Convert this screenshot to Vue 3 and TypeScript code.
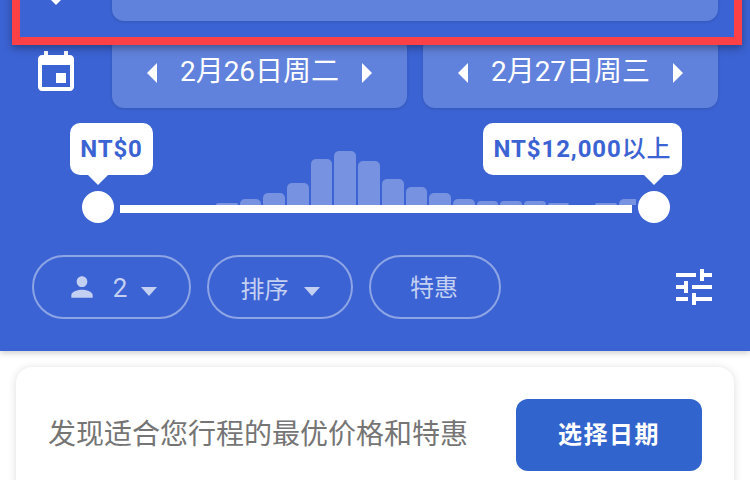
<script setup lang="ts">
const bars: { h: number }[] = [
  { h: 2 }, { h: 6 }, { h: 12 }, { h: 22 }, { h: 46 }, { h: 54 }, { h: 44 }, { h: 26 },
  { h: 18 }, { h: 12 }, { h: 6 }, { h: 4 }, { h: 4 }, { h: 4 }, { h: 2 }, { h: 0 }, { h: 2 }, { h: 6 },
];
</script>

<template>
  <div class="page">
    <header class="header">
      <div class="row date-row">
        <div class="icon-cell">
          <svg class="cal" width="48" height="48" viewBox="0 0 24 24" fill="#fff">
            <path d="M17 12h-5v5h5v-5zM16 1v2H8V1H6v2H5c-1.11 0-1.99.9-1.99 2L3 19c0 1.1.89 2 2 2h14c1.1 0 2-.9 2-2V5c0-1.1-.9-2-2-2h-1V1h-2zm3 18H5V8h14v11z" />
          </svg>
        </div>
        <div class="field date">
          <span class="tri left"></span>
          <span class="date-text">2月26日周二</span>
          <span class="tri right"></span>
        </div>
        <div class="field date">
          <span class="tri left"></span>
          <span class="date-text">2月27日周三</span>
          <span class="tri right"></span>
        </div>
      </div>

      <div class="slider">
        <div class="tip tip-left">NT$0</div>
        <div class="tip tip-right">NT$12,000<span class="tip-cjk">以上</span></div>
        <div class="hist">
          <span v-for="(b, i) in bars" :key="i" class="bar" :style="{ height: b.h + 'px' }"></span>
        </div>
        <div class="track-row">
          <span class="thumb"></span>
          <span class="track"></span>
          <span class="thumb"></span>
        </div>
      </div>

      <div class="filters">
        <button class="pill pill-pax">
          <svg class="person" width="32" height="32" viewBox="0 0 24 24" fill="#c4d0f2">
            <path d="M12 12c2.21 0 4-1.79 4-4s-1.79-4-4-4-4 1.79-4 4 1.79 4 4 4zm0 2c-2.67 0-8 1.34-8 4v2h16v-2c0-2.66-5.33-4-8-4z" />
          </svg>
          <span class="pill-num">2</span>
          <span class="caret"></span>
        </button>
        <button class="pill pill-sort"><span>排序</span><span class="caret"></span></button>
        <button class="pill pill-deal">特惠</button>
        <svg class="tune" width="48" height="48" viewBox="0 0 24 24" fill="#fff">
          <path d="M3 17v2h6v-2H3zM3 5v2h10V5H3zm10 16v-2h8v-2h-8v-2h-2v6h2zM7 9v2H3v2h4v2h2V9H7zm14 4v-2H11v2h10zm-6-4h2V7h4V5h-4V3h-2v6z" />
        </svg>
      </div>
    </header>

    <section class="card">
      <p class="card-text">发现适合您行程的最优价格和特惠</p>
      <button class="cta">选择日期</button>
    </section>

    <div class="highlight">
      <svg class="swap" width="10" height="5" viewBox="0 0 10 5"><path d="M0 0h10L5 5z" fill="#fff" /></svg>
      <div class="field wide"></div>
    </div>
  </div>
</template>

<style>
html, body { margin: 0; background: #fff; overflow: hidden; }
</style>

<style scoped>
.page {
  position: relative;
  width: 750px;
  height: 480px;
  overflow: hidden;
  background: #fff;
  font-family: Roboto, "Noto Sans CJK SC", sans-serif;
}
.header {
  box-sizing: border-box;
  height: 351px;
  background: #3b63d3;
  box-shadow: 0 2px 6px rgba(0, 0, 0, 0.2);
  display: flex;
  flex-direction: column;
  padding: 36px 32px 0;
}
.row { display: flex; gap: 16px; }
.date-row { height: 72px; }
.icon-cell {
  width: 64px;
  flex: none;
  display: flex;
  align-items: center;
  justify-content: flex-start;
}
.cal { margin-top: 2px; }
.field {
  background: #6182dc;
  border-radius: 12px;
  box-shadow: 0 1px 3px rgba(0, 0, 0, 0.14);
  display: flex;
  align-items: center;
  justify-content: center;
  color: #fff;
}
.wide { width: 606px; height: 70px; margin-left: 51px; flex: none; }
.date { width: 295px; box-sizing: border-box; }
.date-text { font-size: 28px; line-height: 40px; margin: 0 23px; white-space: nowrap; }
.tri { width: 0; height: 0; border-top: 10px solid transparent; border-bottom: 10px solid transparent; position: relative; top: 1px; }
.tri.left { border-right: 10px solid #fff; }
.tri.right { border-left: 10px solid #fff; }

.slider {
  position: relative;
  height: 103px;
  margin-top: 15px;
  margin-left: -32px;
  margin-right: -32px;
}
.tip {
  position: absolute;
  top: 0;
  height: 52px;
  box-sizing: border-box;
  background: #fff;
  border-radius: 10px;
  color: #3b63d3;
  font-size: 24px;
  font-weight: 700;
  letter-spacing: 0.9px;
  line-height: 52px;
  text-align: center;
  white-space: nowrap;
}
.tip-cjk { font-weight: 500; }
.tip::after {
  content: "";
  position: absolute;
  top: 52px;
  width: 0;
  height: 0;
  border-left: 10px solid transparent;
  border-right: 10px solid transparent;
  border-top: 10px solid #fff;
}
.tip-left { left: 70px; width: 83px; }
.tip-left::after { left: 18px; }
.tip-right { left: 483px; width: 199px; }
.tip-right::after { left: 161px; }
.hist {
  position: absolute;
  left: 216px;
  bottom: 21px;
  width: 420px;
  height: 56px;
  display: flex;
  align-items: flex-end;
  gap: 2px;
  overflow: hidden;
}
.bar {
  flex: none;
  width: 21.7px;
  background: rgba(255, 255, 255, 0.3);
  border-radius: 5px 5px 0 0;
}
.track-row {
  position: absolute;
  left: 82px;
  right: 80px;
  top: 68px;
  height: 32px;
  display: flex;
  align-items: center;
  gap: 6px;
}
.thumb { width: 32px; height: 32px; border-radius: 50%; background: #fff; flex: none; }
.track { flex: 1; height: 8px; background: #fff; margin-top: 4px; }

.filters {
  display: flex;
  align-items: center;
  gap: 16px;
  margin-top: 29px;
  position: relative;
}
.pill {
  box-sizing: border-box;
  height: 64px;
  border: 2px solid rgba(255, 255, 255, 0.42);
  border-radius: 32px;
  background: transparent;
  color: #c4d0f2;
  font: inherit;
  font-size: 24px;
  padding: 0;
  display: flex;
  align-items: center;
  justify-content: center;
}
.pill-pax { width: 159px; }
.pill-sort { width: 146px; gap: 15px; }
.pill-deal { width: 132px; padding: 0 2px 4px 0; }
.person { margin-right: 15px; margin-left: 0; }
.pill-num { font-size: 26px; margin-right: 14px; position: relative; top: 1px; }
.caret {
  width: 0;
  height: 0;
  border-left: 8px solid transparent;
  border-right: 8px solid transparent;
  border-top: 9px solid #c4d0f2;
  margin-top: 8px;
}
.tune { margin-left: auto; margin-right: 0; flex: none; }

.card {
  box-sizing: border-box;
  margin: 16px 16px 0;
  height: 180px;
  background: #fff;
  border-radius: 16px;
  box-shadow: 0 1px 8px rgba(0, 0, 0, 0.14);
  display: flex;
  align-items: flex-start;
  justify-content: space-between;
  padding: 32px 32px 0;
}
.card-text {
  margin: 0;
  font-size: 28px;
  line-height: 72px;
  color: #757575;
  white-space: nowrap;
}
.cta {
  width: 186px;
  height: 72px;
  border: none;
  border-radius: 12px;
  background: #3164cc;
  color: #fff;
  font: inherit;
  font-size: 24px;
  font-weight: 700;
  letter-spacing: 1.5px;
  padding: 0 0 6px;
}
.highlight {
  position: absolute;
  left: 12px;
  top: -60px;
  width: 730px;
  height: 105px;
  box-sizing: border-box;
  border: 8px solid #fb4146;
  background: #3b63d3;
  box-shadow: 0 3px 8px rgba(0, 0, 0, 0.35);
  display: flex;
  align-items: flex-end;
  padding: 0 0 16px 31px;
}
.swap { flex: none; margin-bottom: 16px; }
</style>
